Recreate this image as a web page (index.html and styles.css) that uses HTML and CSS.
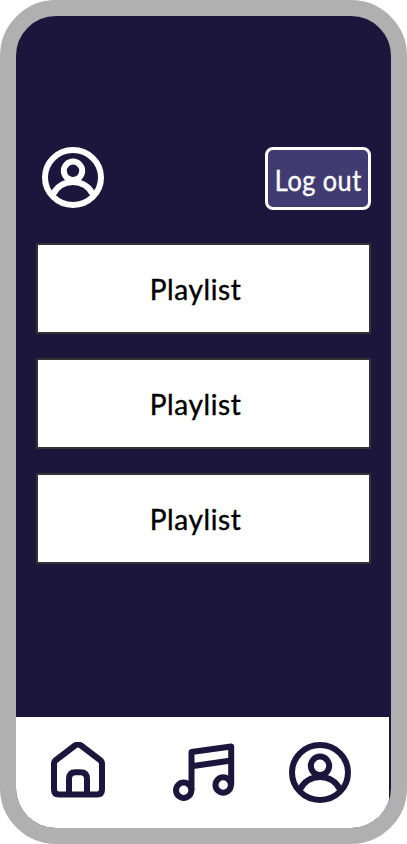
FILE: index.html
```html
<!DOCTYPE html>
<html lang="en">
<head>
<meta charset="utf-8">
<title>Playlists</title>
<link rel="stylesheet" href="styles.css">
</head>
<body>
<div class="phone">
  <header class="top">
    <svg class="icon light" width="62" height="62" viewBox="0 0 62 62"><ellipse cx="31" cy="30.5" rx="28" ry="27.5"/><circle cx="31" cy="23.8" r="9.2"/><path d="M10.500 48C15 39.500 22 35 31 35S47 39.500 51.500 48"/></svg>
    <button class="logout"><span class="label">Log out</span></button>
  </header>
  <main class="list">
    <a class="card"><span class="label">Playlist</span></a>
    <a class="card"><span class="label">Playlist</span></a>
    <a class="card"><span class="label">Playlist</span></a>
  </main>
  <nav class="nav">
    <svg class="icon home" width="56" height="62" viewBox="0 0 56 62"><path d="M4 22Q4 19.500 6 18L25 3.500Q28 1.500 31 3.500L50 18Q52 19.500 52 22V47.500Q52 52.500 47 52.500H9Q4 52.500 4 47.500Z"/><path d="M19 52V37Q19 30.300 25.500 30.300H30.500Q37 30.300 37 37V52"/></svg>
    <svg class="icon music" width="62" height="62" viewBox="0 0 62 62"><circle cx="10.700" cy="48.200" r="7.700"/><circle cx="50.200" cy="43" r="7.700"/><path d="M18.500 48V10L58.200 4.500V43M18.500 24.200L58.200 18.500"/></svg>
    <svg class="icon" width="62" height="62" viewBox="0 0 62 62"><ellipse cx="31" cy="30.5" rx="28" ry="27.5"/><circle cx="31" cy="23.8" r="9.2"/><path d="M10.500 48C15 39.500 22 35 31 35S47 39.500 51.500 48"/></svg>
  </nav>
</div>
</body>
</html>
```
FILE: styles.css
```css
* { box-sizing: border-box; }
body { margin: 0; background: #fff; }
.phone {
  width: 407px;
  height: 844px;
  border: 16px solid #b0b0b0;
  border-radius: 56px;
  background: #1c163d;
  overflow: hidden;
  display: flex;
  flex-direction: column;
  font-family: Lato, sans-serif;
}
.top {
  display: flex;
  justify-content: space-between;
  align-items: flex-start;
  padding: 131px 20px 0 26px;
}
.icon {
  display: block;
  fill: none;
  stroke: #1c163d;
  stroke-width: 6;
  stroke-linejoin: round;
}
.light { stroke: #fff; }
.label {
  display: block;
  font-size: 28px;
  line-height: 34px;
  white-space: nowrap;
  letter-spacing: 0.6px;
  -webkit-text-stroke: 0.4px currentColor;
}
.logout {
  width: 106px;
  height: 63px;
  border: 3px solid #fff;
  border-radius: 8px;
  background: #403c72;
  color: #fff;
  font-family: inherit;
  padding: 2px 0 0;
  display: flex;
  justify-content: center;
  align-items: center;
}
.logout .label { transform: scaleX(0.9); }
.list {
  display: flex;
  flex-direction: column;
  gap: 24px;
  padding: 33px 20px 0;
}
.card {
  height: 91px;
  border: 2px solid #333;
  background: #fff;
  color: #000;
  padding: 1px 16px 0 0;
  display: flex;
  justify-content: center;
  align-items: center;
}
.nav {
  margin-top: auto;
  width: 373px;
  height: 111px;
  background: #fff;
  display: flex;
  align-items: flex-start;
  padding: 25px 0 0 34px;
}
.music { margin: 0 54px 0 67px; }
```
